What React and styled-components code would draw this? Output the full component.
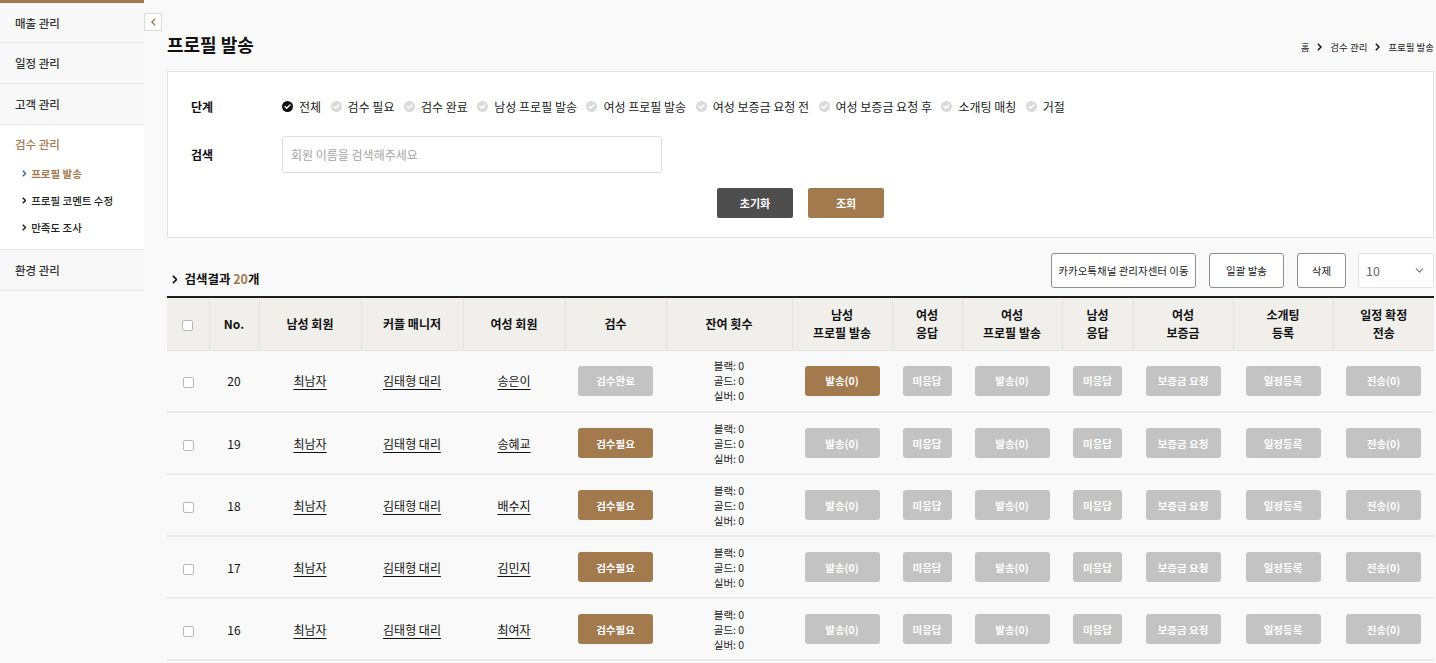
import React from "react";
import styled, { createGlobalStyle } from "styled-components";
import { ChevronDown } from "lucide-react";

const BROWN = "#a27a4e";

const GlobalStyle = createGlobalStyle`
  body {
    margin: 0;
    background: #f9f9f9;
    font-family: "Noto Sans CJK KR", "Noto Sans", sans-serif;
    color: #222;
  }
  * { box-sizing: border-box; }
`;

const Layout = styled.div`
  display: flex;
  position: relative;
  min-height: 663px;
`;

const Sidebar = styled.aside`
  width: 144px;
  flex-shrink: 0;
  border-top: 3px solid ${BROWN};
`;

const MenuItem = styled.div`
  height: 41px;
  padding-left: 15px;
  display: flex;
  align-items: center;
  font-size: 11.5px;
  font-weight: 500;
  color: #333;
  background: #f8f8f8;
  border-bottom: 1px solid #e6e6e6;
  &:first-child { height: 40px; }
`;

const MenuGroup = styled.div`
  background: #fff;
  padding: 10px 0 8px;
  border-bottom: 1px solid #e6e6e6;
`;

const GroupTitle = styled.div`
  padding-left: 15px;
  line-height: 18px;
  font-size: 11.5px;
  font-weight: 500;
  color: ${BROWN};
  margin-bottom: 7px;
`;

const SubItem = styled.div`
  display: flex;
  align-items: center;
  gap: 5px;
  height: 27px;
  padding-left: 22px;
  font-size: 10.5px;
  font-weight: ${(p) => (p.active ? 700 : 500)};
  color: ${(p) => (p.active ? BROWN : "#222")};
`;

const Toggle = styled.button`
  position: absolute;
  left: 144px;
  top: 13px;
  width: 18px;
  height: 18px;
  padding: 0;
  border: 1px solid #dcdcdc;
  background: #fff;
  display: flex;
  align-items: center;
  justify-content: center;
`;

const Main = styled.main`
  flex: 1;
  padding: 30px 2px 0 23px;
`;

const TitleRow = styled.div`
  display: flex;
  justify-content: space-between;
  align-items: center;
  height: 28px;
`;

const Title = styled.h1`
  margin: 0;
  font-size: 18px;
  font-weight: 700;
  color: #111;
`;

const Breadcrumb = styled.div`
  display: flex;
  align-items: center;
  gap: 8px;
  padding-top: 6px;
  font-size: 9.5px;
  color: #222;
`;

const Card = styled.section`
  margin-top: 13px;
  background: #fff;
  border: 1px solid #e3e3e3;
  padding: 23px 23px 19px;
`;

const FieldRow = styled.div`
  display: flex;
  align-items: center;
  min-height: 22px;
  margin-top: ${(p) => p.mt || 0}px;
`;

const Label = styled.div`
  width: 91px;
  font-size: 12px;
  font-weight: 700;
  color: #111;
`;

const Options = styled.div`
  display: flex;
  align-items: center;
  gap: 9.5px;
`;

const Option = styled.label`
  display: flex;
  align-items: center;
  gap: 6px;
  font-size: 12px;
  color: #222;
`;

const SearchInput = styled.input`
  width: 380px;
  height: 37px;
  border: 1px solid #dedede;
  border-radius: 3px;
  padding: 0 8px;
  font-family: inherit;
  font-size: 12px;
  &::placeholder { color: #a5a5a5; }
`;

const ButtonBar = styled.div`
  display: flex;
  justify-content: center;
  gap: 15px;
  margin-top: 15px;
`;

const FilledButton = styled.button`
  width: ${(p) => p.w || 76}px;
  height: 30px;
  border: none;
  border-radius: 2px;
  background: ${(p) => p.bg};
  color: #fff;
  font-family: inherit;
  font-size: 11px;
  font-weight: 700;
  padding: 0;
`;

const ResultBar = styled.div`
  margin-top: 15px;
  display: flex;
  justify-content: space-between;
  align-items: flex-end;
`;

const ResultTitle = styled.div`
  display: flex;
  align-items: center;
  gap: 7px;
  padding-left: 5px;
  line-height: 18px;
  font-size: 12.5px;
  font-weight: 700;
  color: #111;
  & b { color: ${BROWN}; font-weight: 700; }
`;

const Actions = styled.div`
  display: flex;
  gap: 13px;
  align-items: center;
`;

const OutlineButton = styled.button`
  height: 35px;
  width: ${(p) => p.w}px;
  padding: 0;
  border: 1px solid #8e8e8e;
  border-radius: 3px;
  background: #fff;
  font-family: inherit;
  font-size: 10.5px;
  color: #222;
`;

const PageSize = styled.div`
  width: 76px;
  height: 35px;
  border: 1px solid #e4e4e4;
  border-radius: 3px;
  background: #fff;
  display: flex;
  justify-content: space-between;
  align-items: center;
  padding: 0 7px;
  margin-left: -1px;
  font-size: 12.5px;
  color: #666;
`;

const Table = styled.table`
  margin-top: 8px;
  width: 100%;
  border-collapse: collapse;
  table-layout: fixed;
  border-top: 2px solid #1e1e1e;
`;

const Th = styled.th`
  height: 53px;
  background: #f1efeb;
  font-size: 12px;
  font-weight: 700;
  line-height: 18px;
  color: #111;
  border-bottom: 1px solid #e3e3e3;
  border-left: ${(p) => (p.first ? "none" : "1px solid #e6e2dc")};
`;

const Td = styled.td`
  height: 62px;
  text-align: center;
  font-size: 12px;
  color: #111;
  border-bottom: 2px solid #ececec;
  padding: 0;
`;

const Check = styled.span`
  display: inline-block;
  width: 11px;
  height: 11px;
  border: 1px solid #b9b9b9;
  border-radius: 2px;
  background: #fff;
  vertical-align: middle;
`;

const Link = styled.span`
  text-decoration: underline;
  text-underline-offset: 3px;
`;

const Counts = styled.div`
  display: inline-block;
  text-align: left;
  font-size: 10.5px;
  line-height: 15px;
  color: #222;
`;

const CellButton = styled.button`
  width: ${(p) => p.w || 75}px;
  height: 30px;
  border: none;
  border-radius: 3px;
  background: ${(p) => (p.on ? BROWN : "#c3c3c3")};
  color: #fff;
  font-family: inherit;
  font-size: 10.5px;
  font-weight: 700;
  padding: 0;
`;

const Chevron = ({ color = "#111", size = 7 }) => (
  <svg width={size * 0.6} height={size} viewBox="0 0 6 10">
    <path d="M1 1l4 4-4 4" stroke={color} strokeWidth="1.8" fill="none" />
  </svg>
);

const RadioIcon = ({ on }) => (
  <svg width="11" height="11" viewBox="0 0 12 12">
    <circle cx="6" cy="6" r="6" fill={on ? "#111" : "#dadada"} />
    <path d="M3.3 6.1l1.8 1.8 3.6-3.6" stroke="#fff" strokeWidth="1.5" fill="none" strokeLinecap="round" strokeLinejoin="round" />
  </svg>
);

const steps = ["전체", "검수 필요", "검수 완료", "남성 프로필 발송", "여성 프로필 발송", "여성 보증금 요청 전", "여성 보증금 요청 후", "소개팅 매칭", "거절"];

const columns = [
  { w: 42, label: "" },
  { w: 50, label: "No." },
  { w: 102, label: "남성 회원" },
  { w: 102, label: "커플 매니저" },
  { w: 102, label: "여성 회원" },
  { w: 101, label: "검수" },
  { w: 126, label: "잔여 횟수" },
  { w: 100, label: ["남성", "프로필 발송"] },
  { w: 70, label: ["여성", "응답"] },
  { w: 100, label: ["여성", "프로필 발송"] },
  { w: 71, label: ["남성", "응답"] },
  { w: 100, label: ["여성", "보증금"] },
  { w: 100, label: ["소개팅", "등록"] },
  { w: 101, label: ["일정 확정", "전송"] },
];

const rows = [
  { no: 20, woman: "송은이", done: true },
  { no: 19, woman: "송혜교" },
  { no: 18, woman: "배수지" },
  { no: 17, woman: "김민지" },
  { no: 16, woman: "최여자" },
];

export default function App() {
  return (
    <Layout>
      <GlobalStyle />
      <Sidebar>
        <MenuItem>매출 관리</MenuItem>
        <MenuItem>일정 관리</MenuItem>
        <MenuItem>고객 관리</MenuItem>
        <MenuGroup>
          <GroupTitle>검수 관리</GroupTitle>
          <SubItem active>
            <Chevron color="#2f64a8" />
            프로필 발송
          </SubItem>
          <SubItem>
            <Chevron />
            프로필 코멘트 수정
          </SubItem>
          <SubItem>
            <Chevron />
            만족도 조사
          </SubItem>
        </MenuGroup>
        <MenuItem>환경 관리</MenuItem>
      </Sidebar>
      <Toggle>
        <svg width="5" height="8" viewBox="0 0 6 10">
          <path d="M5 1L1 5l4 4" stroke={BROWN} strokeWidth="1.8" fill="none" />
        </svg>
      </Toggle>
      <Main>
        <TitleRow>
          <Title>프로필 발송</Title>
          <Breadcrumb>
            홈 <Chevron size={8} /> 검수 관리 <Chevron size={8} /> 프로필 발송
          </Breadcrumb>
        </TitleRow>

        <Card>
          <FieldRow>
            <Label>단계</Label>
            <Options>
              {steps.map((s, i) => (
                <Option key={s}>
                  <RadioIcon on={i === 0} />
                  {s}
                </Option>
              ))}
            </Options>
          </FieldRow>
          <FieldRow mt={19}>
            <Label>검색</Label>
            <SearchInput placeholder="회원 이름을 검색해주세요" />
          </FieldRow>
          <ButtonBar>
            <FilledButton bg="#4e4e4e">초기화</FilledButton>
            <FilledButton bg={BROWN}>조회</FilledButton>
          </ButtonBar>
        </Card>

        <ResultBar>
          <ResultTitle>
            <Chevron size={9} />
            <span>
              검색결과 <b>20</b>개
            </span>
          </ResultTitle>
          <Actions>
            <OutlineButton w={145}>카카오톡채널 관리자센터 이동</OutlineButton>
            <OutlineButton w={75}>일괄 발송</OutlineButton>
            <OutlineButton w={49}>삭제</OutlineButton>
            <PageSize>
              10
              <ChevronDown size={13} color="#777" />
            </PageSize>
          </Actions>
        </ResultBar>

        <Table>
          <colgroup>
            {columns.map((c, i) => (
              <col key={i} style={{ width: c.w }} />
            ))}
          </colgroup>
          <thead>
            <tr>
              {columns.map((c, i) => (
                <Th key={i} first={i === 0}>
                  {i === 0 ? (
                    <Check />
                  ) : Array.isArray(c.label) ? (
                    <>
                      {c.label[0]}
                      <br />
                      {c.label[1]}
                    </>
                  ) : (
                    c.label
                  )}
                </Th>
              ))}
            </tr>
          </thead>
          <tbody>
            {rows.map((r) => (
              <tr key={r.no}>
                <Td><Check /></Td>
                <Td>{r.no}</Td>
                <Td><Link>최남자</Link></Td>
                <Td><Link>김태형 대리</Link></Td>
                <Td><Link>{r.woman}</Link></Td>
                <Td>
                  <CellButton on={!r.done}>{r.done ? "검수완료" : "검수필요"}</CellButton>
                </Td>
                <Td>
                  <Counts>
                    블랙: 0<br />골드: 0<br />실버: 0
                  </Counts>
                </Td>
                <Td><CellButton on={r.done}>발송(0)</CellButton></Td>
                <Td><CellButton w={49}>미응답</CellButton></Td>
                <Td><CellButton>발송(0)</CellButton></Td>
                <Td><CellButton w={49}>미응답</CellButton></Td>
                <Td><CellButton>보증금 요청</CellButton></Td>
                <Td><CellButton>일정등록</CellButton></Td>
                <Td><CellButton>전송(0)</CellButton></Td>
              </tr>
            ))}
          </tbody>
        </Table>
      </Main>
    </Layout>
  );
}
